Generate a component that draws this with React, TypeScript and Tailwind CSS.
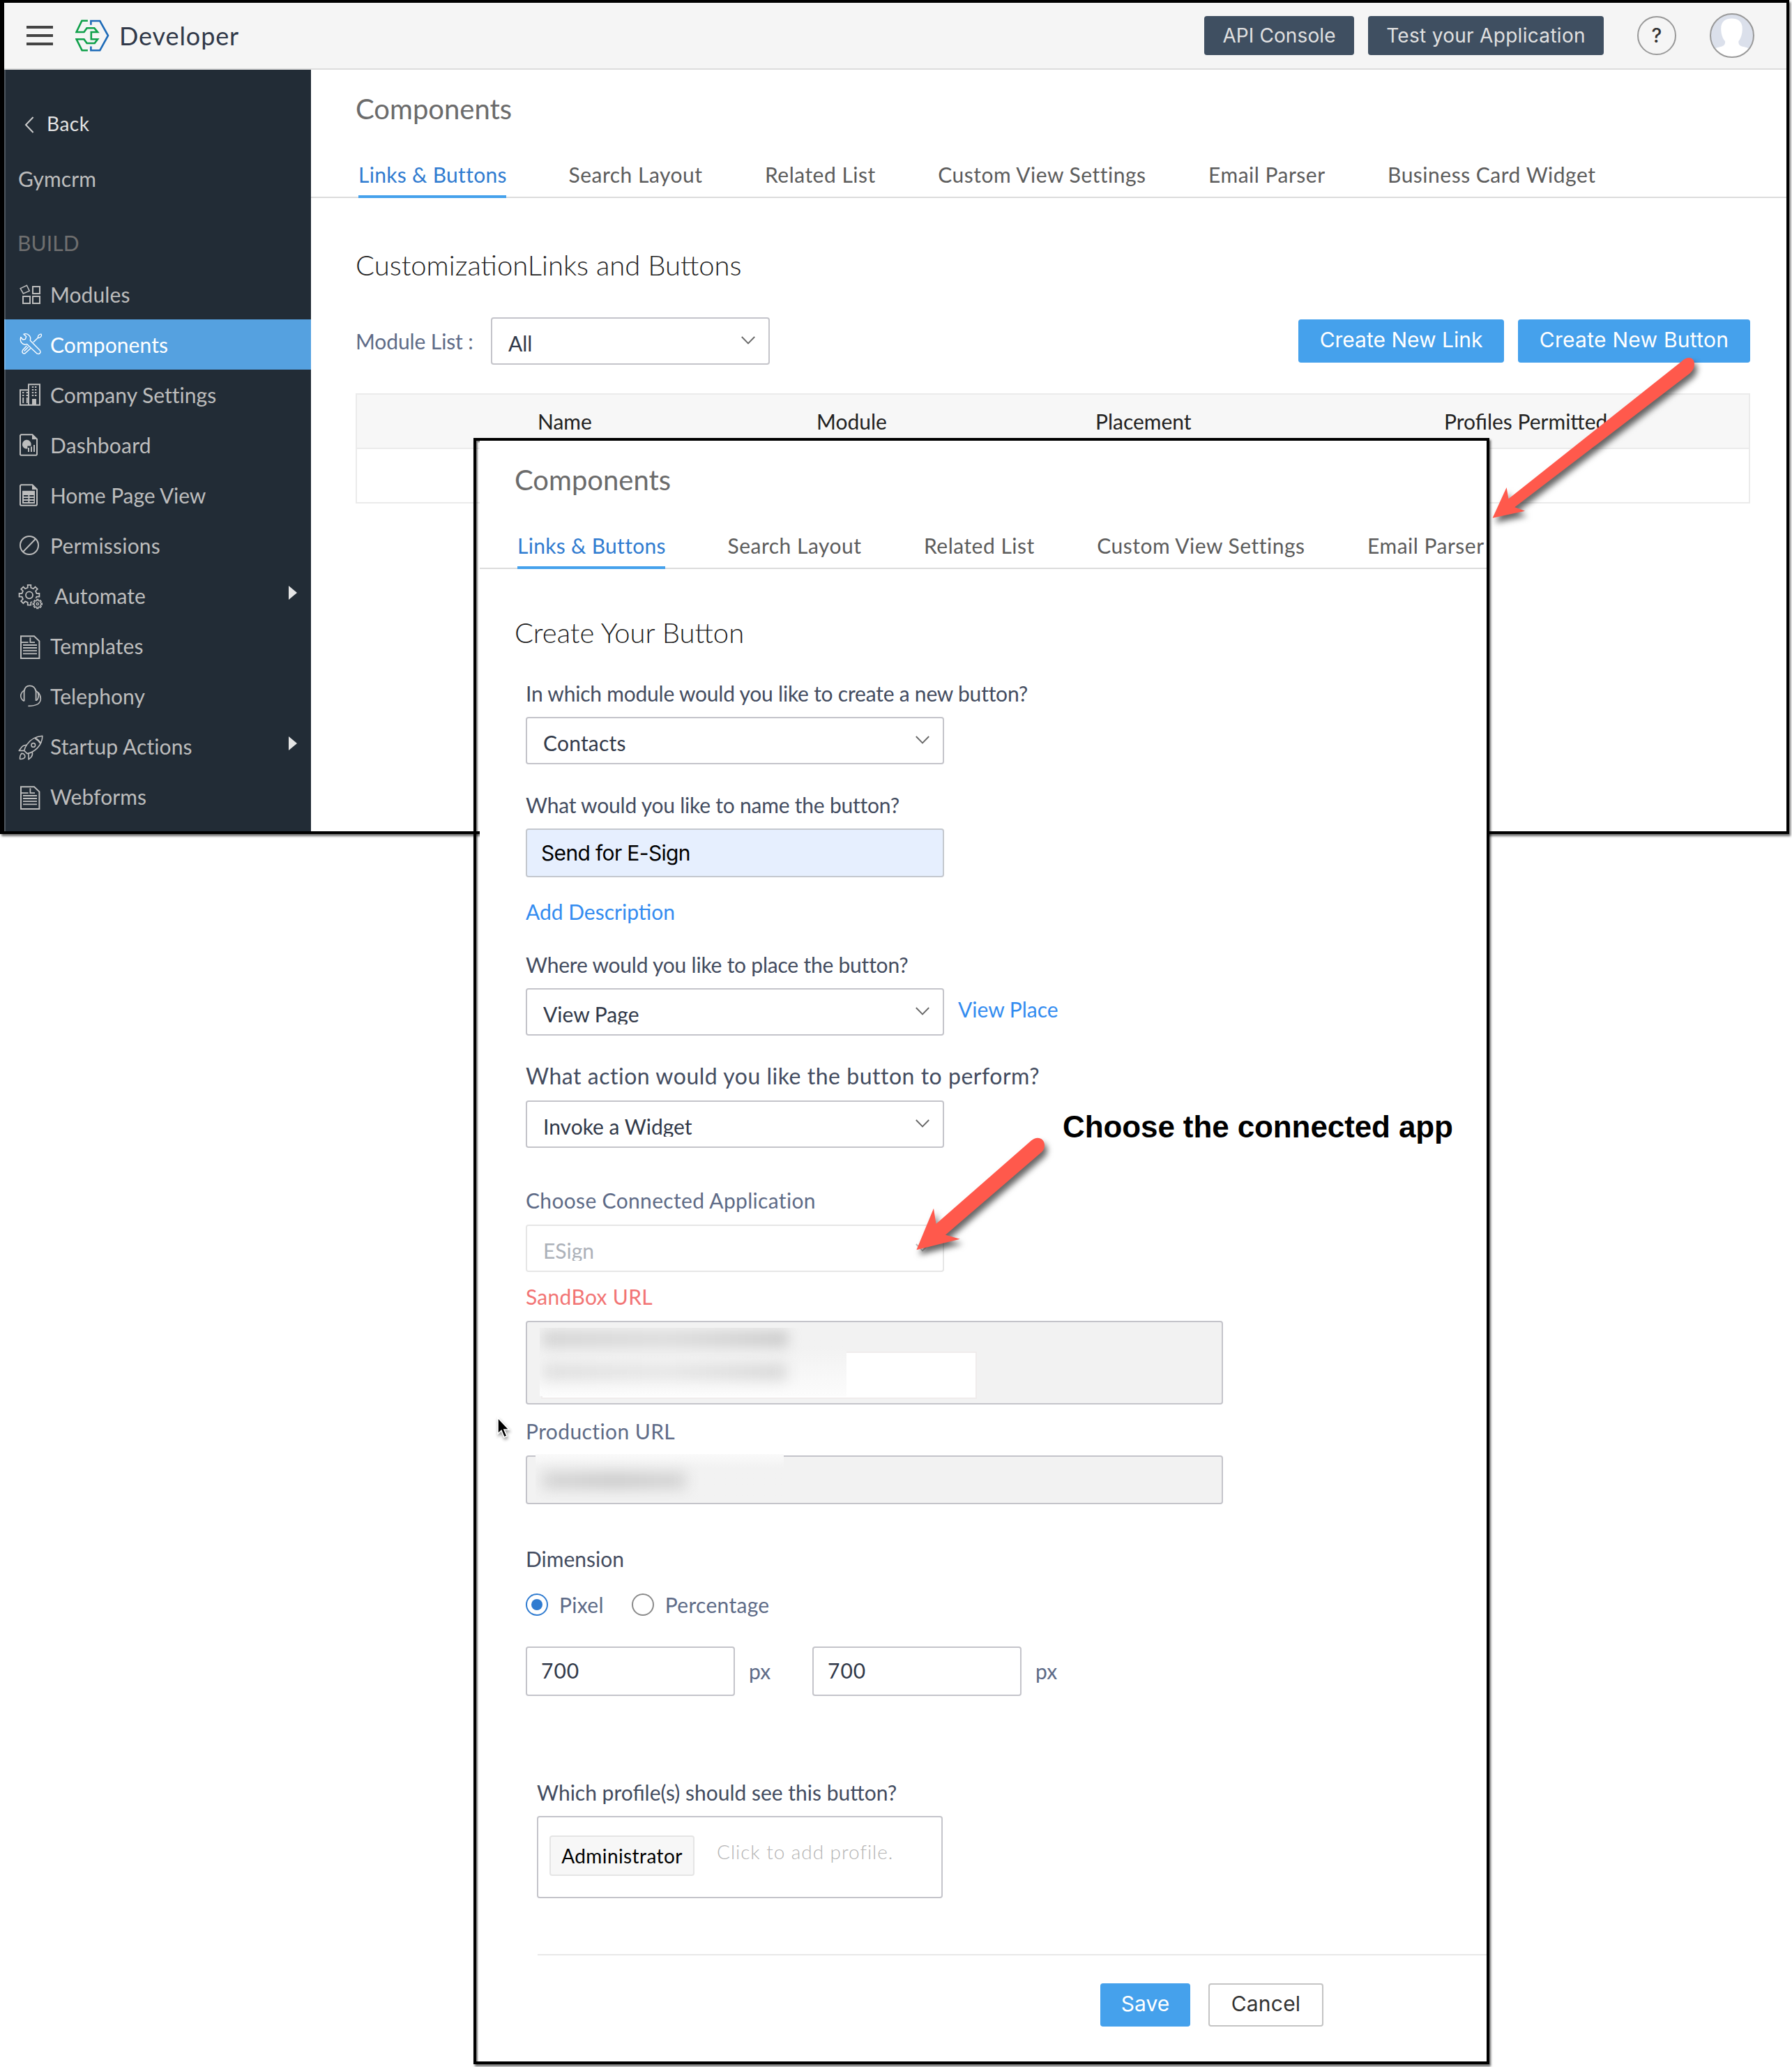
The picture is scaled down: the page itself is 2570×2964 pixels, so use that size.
import React, { useState } from 'react';

const gearPath = (cx: number, cy: number, outer: number, inner: number, teeth: number) => {
  const step = (Math.PI * 2) / teeth;
  const pts: string[] = [];
  for (let i = 0; i < teeth; i++) {
    const a = i * step - Math.PI / 2;
    [
      [inner, -0.27],
      [outer, -0.2],
      [outer, 0.2],
      [inner, 0.27],
    ].forEach(([r, k]) => {
      pts.push(`${(cx + r * Math.cos(a + k * step)).toFixed(2)} ${(cy + r * Math.sin(a + k * step)).toFixed(2)}`);
    });
  }
  return `M${pts.join('L')}Z`;
};

const NavSvg: React.FC<{ children: React.ReactNode }> = ({ children }) => (
  <svg viewBox="0 0 36 36" className="w-9 h-9 shrink-0 overflow-visible" fill="none" stroke="currentColor" strokeWidth="2">
    {children}
  </svg>
);

const ModulesIcon = () => (
  <NavSvg>
    <path d="M3.2 9.6L12.4 5.2L16.2 13.2L7.4 17Z" strokeWidth="1.6" />
    <path d="M21 7h10v10H21zM7 21h10v10H7zM21 21h10v10H21z" />
  </NavSvg>
);

const ComponentsIcon = () => (
  <NavSvg>
    <g strokeWidth="1.4" strokeLinejoin="round">
      <path d="M8 3.2C10 2.4 13 2.6 15 4.2C17.4 6 18.2 9 17.3 12.3L31.4 26.6C33.2 29.6 30.6 32.6 27.3 31.2L12.6 17.4C9.4 18.6 6.4 17.6 4.6 15.2C3.2 13 3 10.6 3.8 7.4L6.8 11L10.4 10.4L11.6 6.6Z" />
      <path d="M28.6 8.2L21.8 14.8M12.4 19.8L6.6 26C4.6 29.4 7.4 32 10.2 30.6L17.8 23.4M14.6 21.6L8.6 27.6" />
      <path d="M28.4 8.4C27.8 5.6 30.4 2.8 33 3.2C34.6 5.6 32 9 28.4 8.4Z" />
    </g>
  </NavSvg>
);

const CompanyIcon = () => (
  <NavSvg>
    <path d="M15 33V3.3H31V32.8H3V11.2H15" />
    <path d="M19.8 7h2.4M24 7h2.4M19.8 11h2.4M24 11h2.4M19.8 15h2.4M24 15h2.4M19.8 19h2.4M24 19h2.4M6 15h2.4M11.6 15h2.4M6 19h2.4M11.6 19h2.4M7.2 22v8M12.8 22v8" />
    <path d="M20 24h6v9h-6z" fill="currentColor" stroke="none" />
  </NavSvg>
);

const DocShape = () => (
  <>
    <path d="M4.2 3.3H20.4L27 9.6V31.6L26 32.7H4L3 31.8V4.4Z" />
    <path d="M20 3L28 10H20Z" fill="currentColor" stroke="none" />
  </>
);

const DashboardIcon = () => (
  <NavSvg>
    <DocShape />
    <path d="M18.6 16A6.4 6.4 0 1 0 12.4 23.6H13.4V19.4H18.6Z" fill="currentColor" stroke="none" />
    <path d="M15 22v6M19 20.5v7.5M23 18v10" />
  </NavSvg>
);

const HomePageIcon = () => (
  <NavSvg>
    <DocShape />
    <path d="M6 11.8h18V30H6z" fill="currentColor" stroke="none" />
    <path d="M8 19h6.4M16.4 19h6M8 23h6.4M16.4 23h6M8 27h6.4M16.4 27h6" stroke="#222c36" strokeWidth="1.8" />
  </NavSvg>
);

const PermissionsIcon = () => (
  <NavSvg>
    <circle cx="16" cy="18" r="13" />
    <path d="M7 27.4L25 8.8" />
  </NavSvg>
);

const AutomateIcon = () => (
  <NavSvg>
    <path d={gearPath(16, 17.3, 14.6, 10.8, 8)} strokeWidth="1.8" />
    <circle cx="16" cy="17.3" r="5" strokeWidth="1.8" />
    <circle cx="27.8" cy="30" r="8.4" fill="#222c36" stroke="none" />
    <path d={gearPath(27.8, 30, 6.6, 4.8, 8)} strokeWidth="1.4" />
    <circle cx="27.8" cy="30" r="1.6" strokeWidth="1.4" />
  </NavSvg>
);

const SheetIcon = () => (
  <NavSvg>
    <path d="M4 4.2H23L30.4 11.4V36H4Z" />
    <path d="M4 13.2h10.6M17.4 6.2v7H24" strokeWidth="1.8" />
    <path d="M7 17h20M7 21h20M7 25.2h20M7 29.4h20" strokeWidth="1.8" />
  </NavSvg>
);

const TelephonyIcon = () => (
  <NavSvg>
    <path d="M8.6 25.4V11.6C9.2 6.4 12.4 3.4 16.6 3.4C21 3.4 24.6 6.4 25.6 11.6V25" strokeWidth="1.8" />
    <path d="M8.4 10.2C2.2 14.6 2.2 21.4 8.4 25.4M26 10.6C30 13.6 30.4 20.6 26.2 24.8M28.6 12.6C33.6 18.6 33.6 25.6 28.6 29.4C25 31.6 19.6 32.4 14.4 32.4" strokeWidth="1.6" />
  </NavSvg>
);

const RocketIcon = () => (
  <NavSvg>
    <g strokeWidth="1.6" strokeLinejoin="round">
      <path d="M34.8 3.2C25 4 17.6 8.4 12.6 15.6C10.6 18.6 9.2 21.6 8.6 24.4L13 28.6C18.4 27.6 23.6 24.6 27.6 20.6C32.2 15.8 34.8 10 34.8 3.2Z" />
      <path d="M24.4 6.4C27 8 30.6 11 32.2 14" strokeWidth="2.4" />
      <circle cx="21.8" cy="16.4" r="2.8" />
      <path d="M13 16.2C9.6 16.2 7 17.2 5.2 19.2L1.2 24.4H8.6M20.4 26.6C20.8 29.4 20.4 31.8 18.8 33.6L15 37V28.6" />
      <path d="M5 28.4C3 30.4 2.4 33 2.6 36.4C5.4 36.6 8.4 36 9.8 33.6C10.2 31 8.6 28.2 5 28.4Z" />
    </g>
  </NavSvg>
);

type NavItem = { label: string; icon: React.FC; active?: boolean; expandable?: boolean; text: string };

const navItems: NavItem[] = [
  { label: 'Modules', icon: ModulesIcon, text: 'ml-2.5' },
  { label: 'Components', icon: ComponentsIcon, active: true, text: 'ml-2.5' },
  { label: 'Company Settings', icon: CompanyIcon, text: 'ml-2.5 tracking-[0.02px]' },
  { label: 'Dashboard', icon: DashboardIcon, text: 'ml-2.5 tracking-[0.2px]' },
  { label: 'Home Page View', icon: HomePageIcon, text: 'ml-2.5 tracking-[-0.1px]' },
  { label: 'Permissions', icon: PermissionsIcon, text: 'ml-2.5 tracking-[0.2px]' },
  { label: 'Automate', icon: AutomateIcon, expandable: true, text: 'ml-4' },
  { label: 'Templates', icon: SheetIcon, text: 'ml-2.5' },
  { label: 'Telephony', icon: TelephonyIcon, text: 'ml-2.5' },
  { label: 'Startup Actions', icon: RocketIcon, expandable: true, text: 'ml-2.5' },
  { label: 'Webforms', icon: SheetIcon, text: 'ml-2.5' },
];

const tabs = ['Links & Buttons', 'Search Layout', 'Related List', 'Custom View Settings', 'Email Parser', 'Business Card Widget'];

const Logo = () => (
  <svg viewBox="0 0 50 48" className="w-[50px] h-12 ml-8" fill="none" strokeWidth="2.6">
    <path
      stroke="#0fa04a"
      d="M17.9 2.8H9.4L1.6 19H12.5L16.6 13.3H27.3L32 19H22.8V29.3H32L27.7 35H16.6L12.5 29.3H1.6L9.6 45.2H17.9"
    />
    <path stroke="#1e6bb8" d="M22.4 8.8V3H35.3L47 24L35.3 45.2H22.4V39.6" />
  </svg>
);

const Avatar = () => (
  <svg viewBox="0 0 64 64" className="w-16 h-16 ml-12">
    <clipPath id="avatar">
      <circle cx="32" cy="32" r="31" />
    </clipPath>
    <g clipPath="url(#avatar)">
      <rect width="64" height="64" fill="#dbe0eb" />
      <path
        fill="#fff"
        d="M31.6 7.6C40 7.6 46.8 11.6 46.8 22C46.8 30 44.6 36 41.4 40C41 44 42.4 46.4 46 47.6C51 48.8 54 49 57 51V64H6V51C10 49 14 48.6 17.6 47.4C21 46.2 22.6 44 22 40C18.4 36 16.2 30 16.2 22C16.2 11.6 23 7.6 31.6 7.6Z"
      />
    </g>
    <circle cx="32" cy="32" r="31" fill="none" stroke="#999" strokeWidth="2" />
  </svg>
);

const PageHeader: React.FC<{ items: string[]; titleClass: string; tabsClass: string }> = ({ items, titleClass, tabsClass }) => (
  <>
    <h1 className={`pt-8 text-[40px] leading-[48px] text-[#6b6b6b] ${titleClass}`}>Components</h1>
    <div className={`mt-[50px] h-[54px] flex gap-[89.5px] border-b-2 border-[#dcdcdc] text-[30px] leading-10 whitespace-nowrap tracking-[0.5px] text-[#5c5c5c] ${tabsClass}`}>
      {items.map((tab, i) => (
        <span key={tab} className={i === 0 ? 'w-[212px] h-[54px] border-b-4 border-[#45a1ec] text-[#2f7bd0] tracking-[0.3px]' : ''}>
          {tab}
        </span>
      ))}
    </div>
  </>
);

type SelectProps = { value: string; className: string; disabled?: boolean; clipped?: boolean };

const Select: React.FC<SelectProps> = ({ value, className, disabled, clipped }) => (
  <div className={`h-[68px] flex items-start justify-between rounded-sm border-2 bg-white ${disabled ? 'border-[#e6e6e6] text-[#acb1b9]' : 'border-[#c4c4ca] text-[#313949]'} ${className}`}>
    <span className={`mt-[14px] ml-[23px] text-[30px] leading-[42px] ${clipped ? 'h-9 overflow-hidden' : ''}`}>{value}</span>
    <svg viewBox="0 0 20 12" className="w-5 h-3 mt-[25px] mr-[19px]" fill="none" stroke={disabled ? '#bbb' : '#666'} strokeWidth="1.8">
      <path d="M0.8 1L10 10.4L19.2 1" />
    </svg>
  </div>
);

const Label: React.FC<{ children: React.ReactNode; className: string }> = ({ children, className }) => (
  <div className={`text-[30px] leading-10 whitespace-nowrap ${className}`}>{children}</div>
);

const Sidebar = () => (
  <aside className="relative w-[440px] shrink-0 bg-[#222c36] text-[#bdbdbd] text-[30px] tracking-[0.1px]">
    <div className="pt-[57px] pl-[29px] h-[97px] flex items-center">
      <svg viewBox="0 0 14 24" className="w-[14px] h-6 mt-1" fill="none" stroke="#ccc" strokeWidth="2">
        <path d="M12.6 1L2 12L12.6 23" />
      </svg>
      <span className="ml-[18px] text-[28px] leading-10 tracking-[0.5px] text-[#e3e3e3]">Back</span>
    </div>
    <div className="mt-[39px] pl-5 leading-10">Gymcrm</div>
    <div className="mt-[52px] pl-[19px] leading-10 text-[#6f6f6f]">BUILD</div>
    <nav className="mt-[18px]">
      {navItems.map(({ label, icon: Icon, active, expandable, text }) => (
        <div key={label} className={`h-[72px] pl-5 flex items-center ${active ? 'bg-[#55a1e0] text-white' : ''}`}>
          <Icon />
          <span className={text}>{label}</span>
          {expandable && (
            <svg viewBox="0 0 12 20" className="w-3 h-5 ml-auto mr-5 -mt-2" fill="#e5e5e5">
              <path d="M0 0L12 10L0 20Z" />
            </svg>
          )}
        </div>
      ))}
    </nav>
    <div className="absolute left-0 top-0 w-0.5 h-full bg-white/20"></div>
  </aside>
);

const Arrow: React.FC<{ d: string; className: string; box: string }> = ({ d, className, box }) => (
  <svg viewBox={box} className={`absolute overflow-visible drop-shadow-[4px_7px_4px_rgba(0,0,0,0.6)] ${className}`}>
    <path d={d} fill="#ff594c" />
  </svg>
);

const ButtonForm = () => {
  const [unit, setUnit] = useState('Pixel');

  return (
    <div className="ml-[66px] flex flex-col items-start text-[#434c60]">
      <Label className="mt-[43px] tracking-[-0.22px]">In which module would you like to create a new button?</Label>
      <Select value="Contacts" className="mt-[14px] w-[600px] tracking-[0.2px]" />

      <Label className="mt-[38px] tracking-[-0.22px]">What would you like to name the button?</Label>
      <div className="mt-[14px] w-[600px] h-[70px] rounded-sm border-2 border-[#c4c8ce] bg-[#e6effe] pl-5 text-[30px] leading-[66px] tracking-[-0.65px] text-black font-[Inter,sans-serif]">
        Send for E-Sign
      </div>

      <Label className="mt-[29px] text-[#338cf0]">Add Description</Label>

      <Label className="mt-[36px] tracking-[-0.22px]">Where would you like to place the button?</Label>
      <div className="mt-[14px] flex">
        <Select value="View Page" className="w-[600px]" clipped />
        <Label className="ml-5 mt-2.5 text-[#338cf0]">View Place</Label>
      </div>

      <Label className="mt-[38px]">
        <span className="text-[32px] tracking-[0.52px]">What action would you like the button to perform?</span>
      </Label>
      <Select value="Invoke a Widget" className="mt-[15px] w-[600px]" clipped />

      <Label className="mt-[55px] tracking-[0.33px] text-[#5e6b87]">Choose Connected Application</Label>
      <Select value="ESign" className="mt-[15px] w-[600px]" disabled clipped />

      <Label className="mt-[15px] tracking-[0.3px] text-[#f27474]">SandBox URL</Label>
      {/* URLs are redacted */}
      <div className="relative mt-[15px] w-[1000px] h-[120px] rounded-sm border-2 border-[#c4c4ca] bg-[#f2f2f2]">
        <div className="absolute left-5 top-[42px] w-[625px] h-[68px] border-2 border-[#f0ecec] bg-white"></div>
        <div className="absolute left-[18px] top-2 w-[440px] h-[98px] overflow-hidden bg-linear-to-b from-[#f2f2f2] from-30% to-[#fcfcfc]">
          <div className="absolute left-1 top-1 w-[352px] h-6 blur-[9px] bg-linear-to-r from-[#d4d4d4] via-[#dcdcdc] to-[#cccccc]"></div>
          <div className="absolute left-1 top-[51px] w-[350px] h-6 blur-[10px] bg-linear-to-r from-[#dedede] via-[#e6e6e6] to-[#d6d6d6]"></div>
        </div>
      </div>

      <Label className="mt-[18px] tracking-[0.4px] text-[#5e6b87]">Production URL</Label>
      <div className="relative mt-[15px] w-[1000px] h-[70px] rounded-sm border-2 border-[#c4c4ca] bg-[#f2f2f2]">
        <div className="absolute left-3 -top-1 w-[356px] h-[67px] overflow-hidden bg-linear-to-b from-[#fafafa] to-[#f2f2f2] to-30%">
          <div className="absolute left-2.5 top-[26px] w-[206px] h-6 blur-[10px] bg-linear-to-r from-[#d4d4d4] via-[#cacaca] to-[#d4d4d4]"></div>
        </div>
      </div>

      <Label className="mt-[58px]">Dimension</Label>
      <div className="mt-[30px] h-8 flex items-center text-[30px] tracking-[0.3px] text-[#5e6b87]">
        {['Pixel', 'Percentage'].map((name, i) => (
          <button key={name} type="button" onClick={() => setUnit(name)} className={`flex items-center ${i ? 'ml-10' : ''}`}>
            <span className={`w-8 h-8 rounded-full border-2 flex items-center justify-center bg-white ${unit === name ? 'border-[#2f7bd0]' : 'border-[#8a8a8a]'}`}>
              {unit === name && <span className="w-4 h-4 rounded-full bg-[#2f7bd0]"></span>}
            </span>
            <span className="ml-4">{name}</span>
          </button>
        ))}
      </div>

      <div className="mt-[44px] flex text-[30px] text-[#5e6b87]">
        {[0, 1].map((n) => (
          <div key={n} className="w-[411px] flex">
            <div className="w-[300px] h-[71px] rounded-sm border-2 border-[#c4c4ca] pl-5 leading-[65px] tracking-[1px] text-[#313949]">
              <span>700</span>
            </div>
            <span className="ml-5 leading-[71px]">px</span>
          </div>
        ))}
      </div>

      <div className="ml-4">
        <Label className="mt-[118px]">Which profile(s) should see this button?</Label>
        <div className="mt-[14px] w-[582px] h-[118px] rounded-sm border-2 border-[#c4c4ca] flex items-start">
          <span className="mt-[26px] ml-4 w-[208px] h-[58px] rounded-sm border-2 border-[#e5e5e5] bg-[#f7f7f7] text-center text-[28px] leading-[55px] tracking-[0.4px] text-black">
            Administrator
          </span>
          <span className="mt-[29px] ml-8 text-[28px] leading-10 font-light tracking-[0.95px] text-[#b4b4b4]">Click to add profile.</span>
        </div>
      </div>
    </div>
  );
};

const App: React.FC = () => {
  return (
    <div className="relative w-[2570px] h-[2964px] overflow-hidden bg-white font-[Lato,'Liberation_Sans',sans-serif]">
      <div className="w-[2566px] h-[1196px] flex flex-col border-4 border-l-[6px] border-black shadow-[2px_3px_3px_rgba(0,0,0,0.55)]">
        <header className="h-24 shrink-0 pl-8 pr-[46px] flex items-center border-b-2 border-[#dcdcdc] bg-[#f5f5f5]">
          <div className="w-[38px] flex flex-col gap-2">
            <span className="h-1 bg-[#444]"></span>
            <span className="h-1 bg-[#444]"></span>
            <span className="h-1 bg-[#444]"></span>
          </div>
          <Logo />
          <span className="ml-[13px] text-[36px] tracking-[0.9px] text-[#313949]">Developer</span>
          <div className="ml-auto flex items-center font-[Inter,sans-serif]">
            <button type="button" className="w-[215px] h-14 rounded bg-[#3f4f61] text-[28px] tracking-[0.1px] text-[#e0e0e0]">API Console</button>
            <button type="button" className="ml-5 w-[338px] h-14 rounded bg-[#3f4f61] text-[28px] tracking-[0.3px] text-[#e0e0e0]">Test your Application</button>
            <span className="ml-12 w-14 h-14 rounded-full border-2 border-[#999] flex items-center justify-center text-[28px] font-medium text-[#333]">?</span>
            <Avatar />
          </div>
        </header>

        <div className="flex-1 flex">
          <Sidebar />
          <main className="flex-1 bg-white">
            <PageHeader items={tabs} titleClass="pl-16" tabsClass="pl-[68px]" />
            <h2 className="mt-[72px] ml-16 text-[40px] leading-[48px] font-light text-[#222]">CustomizationLinks and Buttons</h2>
            <div className="mt-[51px] ml-16 mr-[52px] h-[68px] flex items-start">
              <span className="mt-[14px] w-[194px] text-[30px] leading-10 tracking-[-0.1px] text-[#5e6b87]">Module List :</span>
              <Select value="All" className="w-[400px]" />
              <button type="button" className="ml-auto mt-[3px] w-[295px] h-[62px] pb-[3px] rounded bg-[#45a1ec] text-[30px] text-white font-[Inter,sans-serif]">Create New Link</button>
              <button type="button" className="ml-5 mt-[3px] w-[333px] h-[62px] pb-[3px] rounded bg-[#45a1ec] text-[30px] tracking-[0.25px] text-white font-[Inter,sans-serif]">Create New Button</button>
            </div>
            <div className="mt-[41px] ml-16 mr-[52px] border-2 border-[#ebebeb] text-[30px] text-[#222]">
              <div className="h-[78px] pl-[259px] pt-[18px] flex leading-10 border-b-2 border-[#ebebeb] bg-[#f7f7f7]">
                <span className="w-[400px]">Name</span>
                <span className="w-[400px]">Module</span>
                <span className="w-[500px]">Placement</span>
                <span>Profiles Permitted</span>
              </div>
              <div className="h-[76px]"></div>
            </div>
          </main>
        </div>
      </div>

      {/* create-button window, laid over the listing */}
      <section className="absolute left-[679px] top-[628px] w-[1457px] h-[2332px] border-4 border-black shadow-[2px_3px_3px_rgba(0,0,0,0.6),inset_2px_2px_2px_rgba(0,0,0,0.5)]">
        <div className="ml-[5px] h-full bg-white">
          <PageHeader items={tabs.slice(0, 5)} titleClass="pl-[50px]" tabsClass="pl-[54px]" />
          <h2 className="mt-[67px] ml-[50px] text-[40px] leading-[48px] font-light text-[#222]">Create Your Button</h2>
          <ButtonForm />
          <div className="mt-20 ml-[83px] h-0.5 bg-[#e8e8e8]"></div>
          <div className="mt-10 pl-[890px] flex font-[Inter,sans-serif] text-[30px]">
            <button type="button" className="w-[129px] h-[62px] pb-[3px] rounded bg-[#45a1ec] text-white">Save</button>
            <button type="button" className="ml-[26px] w-[165px] h-[62px] pb-[3px] rounded border-2 border-[#c4c4c4] tracking-[0.2px] text-[#333]">Cancel</button>
          </div>
        </div>
      </section>

      <Arrow
        className="left-[2130px] top-[500px] w-[310px] h-[250px]"
        box="2130 500 310 250"
        d="M2140.6 742.7L2160.6 699L2163.5 715.3L2412 518C2420 510 2430 512 2430 522C2430 527 2428 531 2424 535L2172.3 727.3L2187 732.7Z"
      />
      <Arrow
        className="left-[1300px] top-[1620px] w-[210px] h-[180px]"
        box="1300 1620 210 180"
        d="M1314.4 1792.3L1339 1732.7L1342.5 1755L1479 1635.6C1487 1628 1498 1632 1498 1642C1498 1646 1497 1649 1494 1652L1356 1770.7L1376.7 1776.7Z"
      />
      <span className="absolute left-[1524px] top-[1590px] text-[44px] leading-[52px] font-bold tracking-[-0.1px] whitespace-nowrap text-black font-['Liberation_Sans',Arial,sans-serif]">
        Choose the connected app
      </span>
      <svg viewBox="0 0 20 32" className="absolute left-[712px] top-[2031px] w-5 h-8 drop-shadow-[1px_3px_2px_rgba(0,0,0,0.4)]">
        <path d="M2 2V25L7 20.4L11 30L15 28.2L11 19H18Z" fill="#000" stroke="#fff" strokeWidth="1.6" />
      </svg>
    </div>
  );
};

export default App;
